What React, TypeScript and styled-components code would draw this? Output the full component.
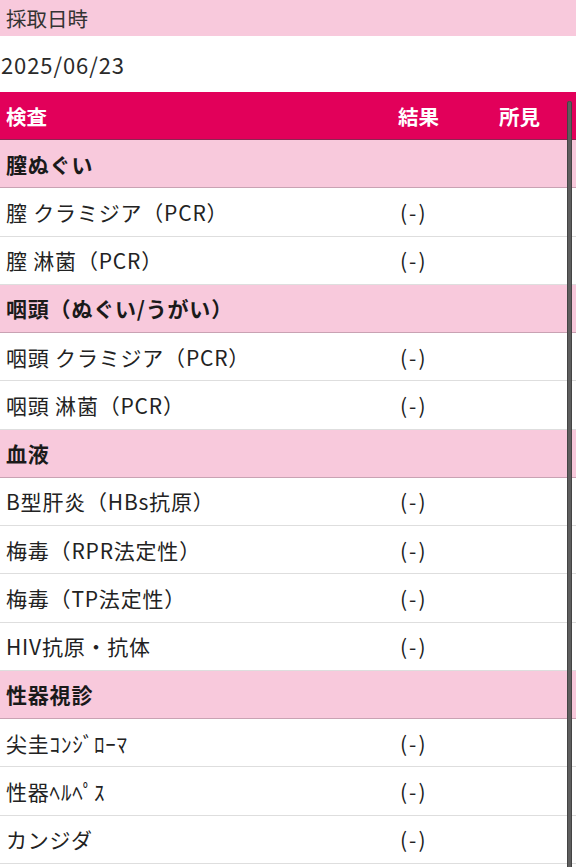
import React from "react";
import styled, { createGlobalStyle } from "styled-components";

const Global = createGlobalStyle`
  html, body { margin: 0; padding: 0; background: #ffffff; }
  body { font-family: "Noto Sans CJK JP", "Noto Sans", sans-serif; color: #222; }
  * { box-sizing: border-box; }
`;

const Page = styled.div`
  position: relative;
  width: 576px;
  height: 867px;
  overflow: hidden;
  background: #fff;
`;

const LabelBar = styled.div`
  height: 36px;
  background: #f8c9dc;
  display: flex;
  align-items: center;
  padding-left: 6px;
  font-size: 20.5px;
  color: #333;
`;

const DateRow = styled.div`
  height: 56px;
  display: flex;
  align-items: center;
  padding-left: 1px;
  font-size: 22px;
  letter-spacing: 0.9px;
  color: #2a2a2a;
`;

const Grid = styled.div`
  display: grid;
  grid-template-columns: 392px 101px 1fr;
`;

const HeaderRow = styled(Grid)`
  height: 48px;
  background: #e2005a;
  border-bottom: 1.5px solid #8c2552;
  color: #fff;
  font-weight: 700;
  font-size: 20.5px;
  align-items: center;
`;

const Row = styled(Grid)<{ $category?: boolean }>`
  height: 48.25px;
  align-items: center;
  background: ${(p) => (p.$category ? "#f8c9dc" : "#fff")};
  border-bottom: 1px solid ${(p) => (p.$category ? "#c9a2b3" : "#dedede")};
  font-size: 21px;
  letter-spacing: 0.8px;
  font-weight: ${(p) => (p.$category ? 700 : 400)};
  color: ${(p) => (p.$category ? "#1a1a1a" : "#222")};
`;

const Cell = styled.div<{ $pad?: number; $wide?: boolean }>`
  padding-left: ${(p) => p.$pad ?? 6}px;
  white-space: nowrap;
  letter-spacing: ${(p) => (p.$wide ? "2px" : "inherit")};
`;

const ScrollIndicator = styled.div`
  position: absolute;
  right: 4px;
  top: 101px;
  width: 5px;
  bottom: -10px;
  border-radius: 3px;
  background: #5e5e5e;
  box-shadow: inset 1px 0 0 #444, inset -1px 0 0 #444;
`;

type Item = { name: string; category?: boolean; result?: string };

const items: Item[] = [
  { name: "膣ぬぐい", category: true },
  { name: "膣 クラミジア（PCR）", result: "(-)" },
  { name: "膣 淋菌（PCR）", result: "(-)" },
  { name: "咽頭（ぬぐい/うがい）", category: true },
  { name: "咽頭 クラミジア（PCR）", result: "(-)" },
  { name: "咽頭 淋菌（PCR）", result: "(-)" },
  { name: "血液", category: true },
  { name: "B型肝炎（HBs抗原）", result: "(-)" },
  { name: "梅毒（RPR法定性）", result: "(-)" },
  { name: "梅毒（TP法定性）", result: "(-)" },
  { name: "HIV抗原・抗体", result: "(-)" },
  { name: "性器視診", category: true },
  { name: "尖圭ｺﾝｼﾞﾛｰﾏ", result: "(-)" },
  { name: "性器ﾍﾙﾍﾟｽ", result: "(-)" },
  { name: "カンジダ", result: "(-)" },
];

export default function App() {
  return (
    <Page>
      <Global />
      <LabelBar>採取日時</LabelBar>
      <DateRow>2025/06/23</DateRow>
      <HeaderRow>
        <Cell>検査</Cell>
        <Cell $pad={6}>結果</Cell>
        <Cell $pad={6}>所見</Cell>
      </HeaderRow>
      {items.map((it, i) => (
        <Row key={i} $category={it.category}>
          <Cell>{it.name}</Cell>
          <Cell $pad={8} $wide>{it.result ?? ""}</Cell>
          <Cell $pad={6}></Cell>
        </Row>
      ))}
      <ScrollIndicator />
    </Page>
  );
}
